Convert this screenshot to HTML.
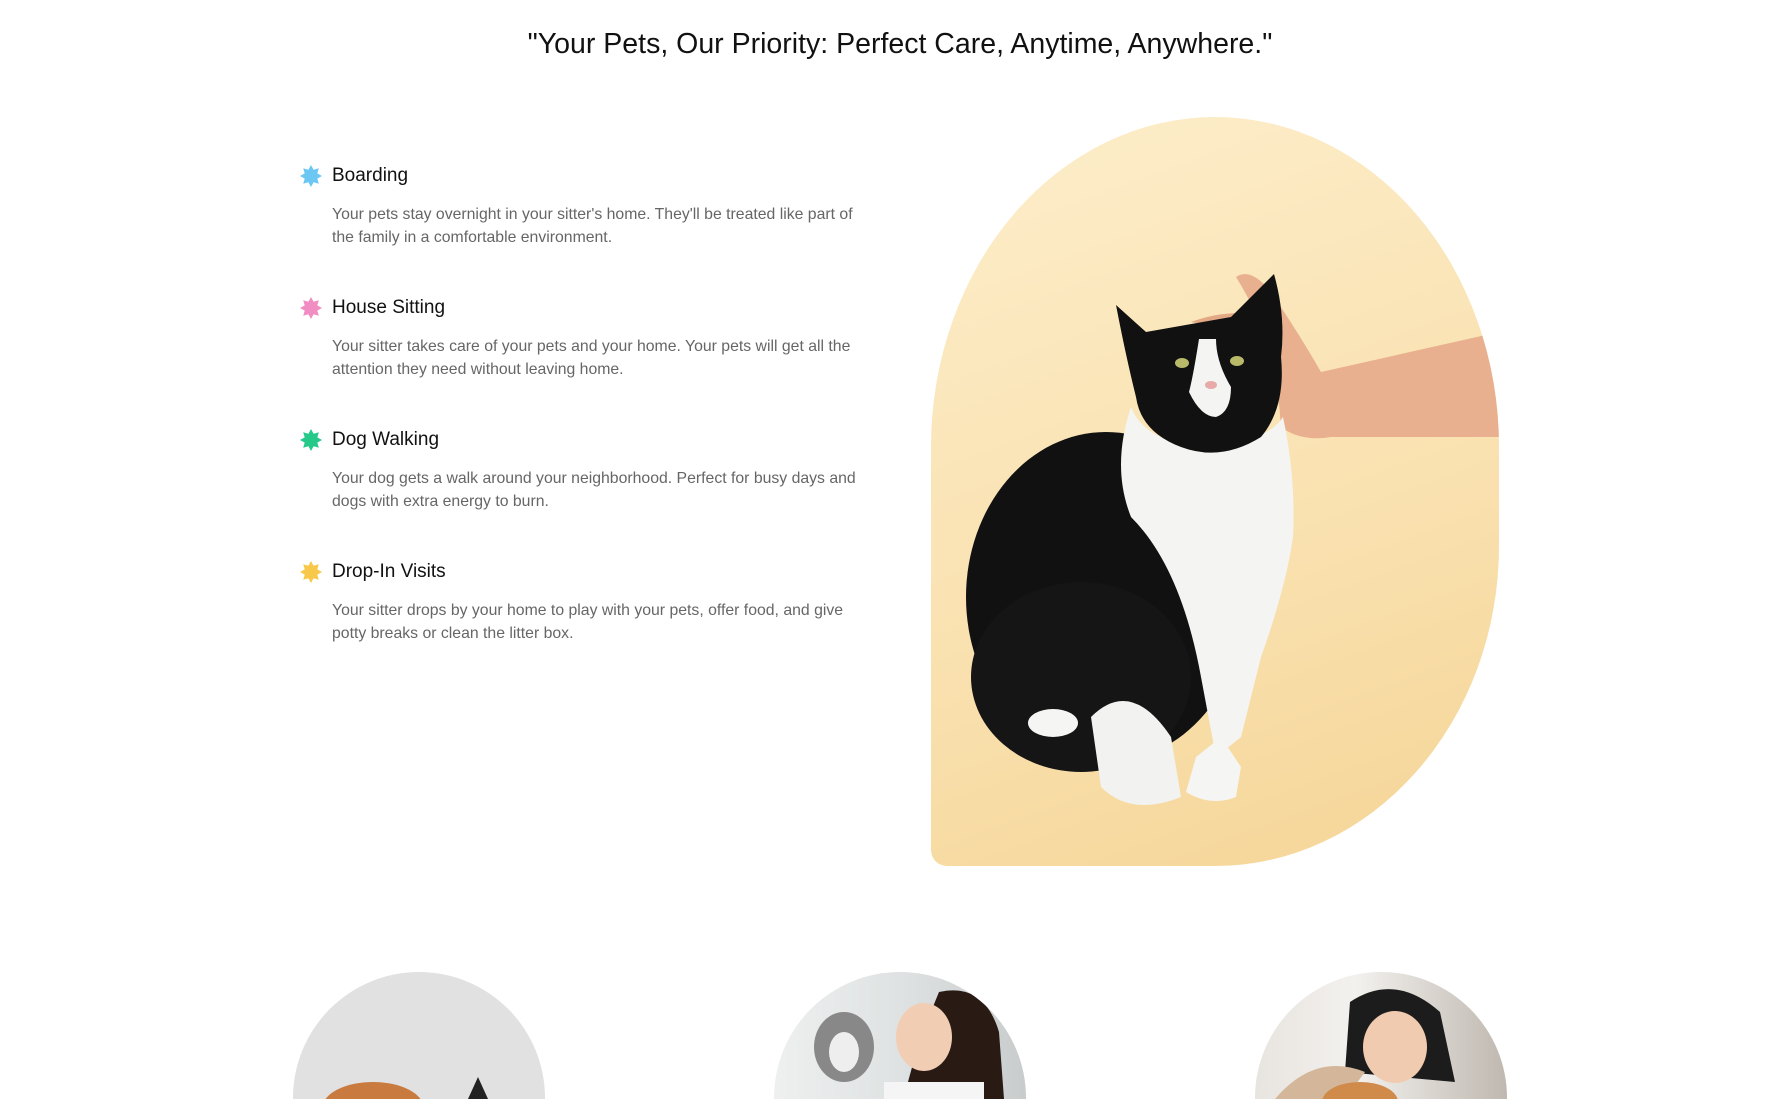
<!DOCTYPE html>
<html style="height:1099px;overflow:hidden"><head><meta charset="utf-8"><style>
body{margin:0;background:#fff;font-family:"Liberation Sans",sans-serif;width:1787px;height:1099px;overflow:hidden;position:relative}
h1{position:absolute;top:28px;left:0;width:1800px;text-align:center;margin:0;font-weight:400;font-size:28.5px;color:#111}
.item{position:absolute;left:300px;width:620px}
.item h3{margin:0;font-weight:400;font-size:19px;color:#111;position:relative;padding-left:32px;height:24px;line-height:24px}
.item svg.st{position:absolute;left:0;top:1px}
.item p{margin:15px 0 0 32px;width:580px;font-size:15.8px;line-height:23px;color:#666;white-space:nowrap}
.photo{position:absolute;left:931px;top:117px;width:568px;height:749px;border-radius:284px 284px 284px 16px/330px 330px 320px 16px;overflow:hidden;background:linear-gradient(160deg,#fdeecb 0%,#f9e0ae 60%,#f5d596 100%)}
.c{position:absolute;top:972px;width:252px;height:127px;border-radius:126px 126px 0 0/126px 126px 0 0;overflow:hidden}
</style></head><body>
<h1>"Your Pets, Our Priority: Perfect Care, Anytime, Anywhere."</h1>

<div class="item" style="top:164px"><h3><svg class="st" width="22" height="22" viewBox="-11 -11 22 22"><polygon fill="#6cc8f2" points="0,-11 2.6,-6.3 7.8,-7.8 6.3,-2.6 11,0 6.3,2.6 7.8,7.8 2.6,6.3 0,11 -2.6,6.3 -7.8,7.8 -6.3,2.6 -11,0 -6.3,-2.6 -7.8,-7.8 -2.6,-6.3"/></svg>Boarding</h3><p>Your pets stay overnight in your sitter's home. They'll be treated like part of<br>the family in a comfortable environment.</p></div>
<div class="item" style="top:296px"><h3><svg class="st" width="22" height="22" viewBox="-11 -11 22 22"><polygon fill="#f28dc3" points="0,-11 2.6,-6.3 7.8,-7.8 6.3,-2.6 11,0 6.3,2.6 7.8,7.8 2.6,6.3 0,11 -2.6,6.3 -7.8,7.8 -6.3,2.6 -11,0 -6.3,-2.6 -7.8,-7.8 -2.6,-6.3"/></svg>House Sitting</h3><p>Your sitter takes care of your pets and your home. Your pets will get all the<br>attention they need without leaving home.</p></div>
<div class="item" style="top:428px"><h3><svg class="st" width="22" height="22" viewBox="-11 -11 22 22"><polygon fill="#27c98a" points="0,-11 2.6,-6.3 7.8,-7.8 6.3,-2.6 11,0 6.3,2.6 7.8,7.8 2.6,6.3 0,11 -2.6,6.3 -7.8,7.8 -6.3,2.6 -11,0 -6.3,-2.6 -7.8,-7.8 -2.6,-6.3"/></svg>Dog Walking</h3><p>Your dog gets a walk around your neighborhood. Perfect for busy days and<br>dogs with extra energy to burn.</p></div>
<div class="item" style="top:560px"><h3><svg class="st" width="22" height="22" viewBox="-11 -11 22 22"><polygon fill="#f8c84a" points="0,-11 2.6,-6.3 7.8,-7.8 6.3,-2.6 11,0 6.3,2.6 7.8,7.8 2.6,6.3 0,11 -2.6,6.3 -7.8,7.8 -6.3,2.6 -11,0 -6.3,-2.6 -7.8,-7.8 -2.6,-6.3"/></svg>Drop-In Visits</h3><p>Your sitter drops by your home to play with your pets, offer food, and give<br>potty breaks or clean the litter box.</p></div>

<div class="photo"><svg width="568" height="749" viewBox="0 0 568 749">
<path d="M305,160 Q320,150 340,175 Q370,220 390,255 L568,215 L568,320 L400,320 Q370,325 350,310 L345,250 Q330,200 305,160Z" fill="#e8b08e"/>
<path d="M260,205 Q300,190 345,200 L345,220 Z" fill="#e3a985"/>
<ellipse cx="175" cy="480" rx="140" ry="165" fill="#111"/>
<ellipse cx="150" cy="560" rx="110" ry="95" fill="#151515"/>
<path d="M200,290 Q215,330 290,330 Q340,320 352,300 Q365,360 362,420 Q355,470 330,540 L310,620 L285,640 L270,560 Q250,450 200,400 Q180,350 200,290Z" fill="#f4f4f2"/>
<path d="M185,188 L215,215 L300,200 L343,157 Q355,200 350,240 Q355,290 330,320 Q290,345 250,330 Q210,315 205,280 Q195,240 185,188Z" fill="#111"/>
<path d="M268,222 Q262,260 258,275 Q270,300 285,300 Q300,295 300,270 Q285,245 285,222Z" fill="#f4f4f2"/>
<ellipse cx="251" cy="246" rx="7" ry="5" fill="#b9b96a"/><ellipse cx="306" cy="244" rx="7" ry="5" fill="#b9b96a"/>
<ellipse cx="280" cy="268" rx="6" ry="4" fill="#e8a9a9"/>
<path d="M160,600 Q200,560 240,620 L250,680 Q200,700 170,670Z" fill="#f2f2f0"/>
<ellipse cx="122" cy="606" rx="25" ry="14" fill="#f5f5f3"/>
<path d="M265,640 L290,620 L310,650 L305,680 Q280,690 255,675Z" fill="#f5f5f3"/>
</svg></div>

<div class="c" style="left:293px;background:#e1e1e1"><svg width="252" height="127"><ellipse cx="80" cy="135" rx="50" ry="25" fill="#c97a3e"/><path d="M175,127 L185,105 L195,127Z" fill="#222"/></svg></div>
<div class="c" style="left:774px;background:linear-gradient(90deg,#eef0f0,#dfe2e2 50%,#c9cccc)"><svg width="252" height="127"><ellipse cx="70" cy="75" rx="30" ry="35" fill="#888"/><ellipse cx="70" cy="80" rx="15" ry="20" fill="#eee"/><path d="M165,20 Q210,10 225,60 L230,127 L130,127 Q140,80 165,20Z" fill="#2a1a14"/><ellipse cx="150" cy="65" rx="28" ry="34" fill="#f1cdb4"/><rect x="110" y="110" width="100" height="17" fill="#f5f5f5"/></svg></div>
<div class="c" style="left:1255px;background:linear-gradient(90deg,#e8e4df,#f3f1ee 40%,#bfb8b0)"><svg width="252" height="127"><path d="M95,30 Q140,0 185,40 L200,110 L90,100Z" fill="#1c1c1c"/><ellipse cx="140" cy="75" rx="32" ry="36" fill="#f0cbb0"/><path d="M20,127 Q60,80 110,100 L90,127Z" fill="#d4b79a"/><ellipse cx="105" cy="130" rx="38" ry="20" fill="#d08a4a"/></svg></div>
</body></html>
